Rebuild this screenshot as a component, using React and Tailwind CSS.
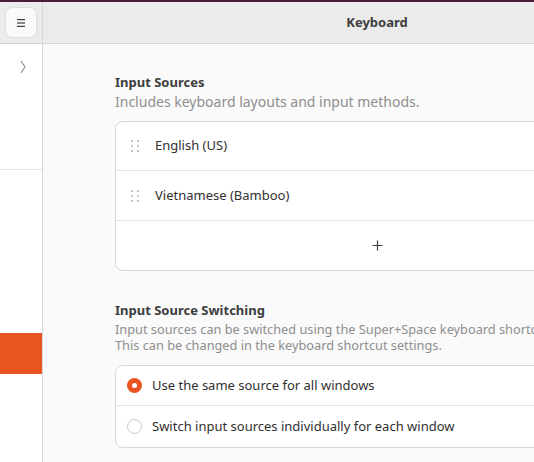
import React from 'react';

const font = { fontFamily: '"Noto Sans", "Open Sans", sans-serif' };

function DragHandle() {
  return (
    <div className="grid grid-cols-2 gap-x-[4px] gap-y-[3px] w-[8px]">
      {[0, 1, 2, 3, 4, 5].map((i) => (
        <span key={i} className="block w-[2px] h-[2px] rounded-full bg-[#b5b5b5]" />
      ))}
    </div>
  );
}

function Radio({ checked }) {
  if (checked) {
    return (
      <span className="flex items-center justify-center w-[15px] h-[15px] rounded-full bg-[#e95420]">
        <span className="block w-[5px] h-[5px] rounded-full bg-white" />
      </span>
    );
  }
  return <span className="block w-[15px] h-[15px] rounded-full border border-[#c9c9c9] bg-white" />;
}

export default function App() {
  return (
    <div className="w-[534px] h-[462px] overflow-hidden bg-[#fafafa] flex flex-col" style={font}>
      {/* window top edge */}
      <div className="h-[2px] shrink-0 bg-[#4a1d3b]" />

      <div className="flex flex-1 min-h-0">
        {/* Sidebar */}
        <div className="w-[43px] shrink-0 flex flex-col border-r border-[#d6d6d6] bg-white">
          <div className="h-[42px] shrink-0 bg-[#ebebeb] border-b border-[#d6d6d6] flex items-start pl-[6px] pt-[6px]">
            <button className="w-[30px] h-[29px] rounded-[6px] bg-[#fafafa] shadow-[0_0_0_1px_rgba(0,0,0,0.05)] flex items-center justify-center">
              <svg width="12" height="10" viewBox="0 0 12 10">
                <rect x="2" y="1" width="8" height="1.2" fill="#3d3d3d" />
                <rect x="2" y="4.4" width="8" height="1.2" fill="#3d3d3d" />
                <rect x="2" y="7.8" width="8" height="1.2" fill="#3d3d3d" />
              </svg>
            </button>
          </div>
          <div className="h-[126px] shrink-0 border-b border-[#e3e3e3] flex items-start justify-end pr-[16px] pt-[16px]">
            <svg width="6" height="14" viewBox="0 0 6 14">
              <path d="M1 1 L5 7 L1 13" fill="none" stroke="#8a8a8a" strokeWidth="1.1" />
            </svg>
          </div>
          <div className="h-[163px] shrink-0" />
          <div className="h-[41px] shrink-0 bg-[#e95420]" />
        </div>

        {/* Main pane */}
        <div className="w-[668px] shrink-0 flex flex-col">
          <div className="h-[42px] shrink-0 bg-[#ebebeb] border-b border-[#d6d6d6] flex items-center justify-center">
            <span className="text-[13px] font-bold text-[#3d3d3d]">Keyboard</span>
          </div>

          <div className="px-[72px] pt-[28px] flex flex-col">
            <h2 className="text-[13px] leading-[20px] font-bold text-[#3d3d3d]">Input Sources</h2>
            <p className="text-[14px] leading-[20px] text-[#8e8e8e]">Includes keyboard layouts and input methods.</p>

            <div className="mt-[9px] rounded-[8px] border border-[#dadada] bg-white flex flex-col">
              <div className="h-[49px] flex items-center gap-[16px] pl-[15px] border-b border-[#e3e3e3]">
                <DragHandle />
                <span className="text-[13px] text-[#303030]">English (US)</span>
              </div>
              <div className="h-[50px] flex items-center gap-[16px] pl-[15px] border-b border-[#e3e3e3]">
                <DragHandle />
                <span className="text-[13px] text-[#303030]">Vietnamese (Bamboo)</span>
              </div>
              <div className="h-[49px] flex items-center justify-center">
                <svg width="11" height="11" viewBox="0 0 11 11">
                  <path d="M5.5 0.5 V10.5 M0.5 5.5 H10.5" stroke="#3d3d3d" strokeWidth="1.2" />
                </svg>
              </div>
            </div>

            <h2 className="mt-[29px] text-[13px] leading-[20px] font-bold text-[#3d3d3d]">Input Source Switching</h2>
            <p className="text-[12.75px] leading-[16px] text-[#8e8e8e] mt-[1px] whitespace-nowrap">
              Input sources can be switched using the Super+Space keyboard shortcut.
              <br />
              This can be changed in the keyboard shortcut settings.
            </p>

            <div className="mt-[12px] rounded-[8px] border border-[#dadada] bg-white flex flex-col">
              <div className="h-[40px] flex items-center gap-[10px] pl-[11px] border-b border-[#e3e3e3]">
                <Radio checked />
                <span className="text-[13px] text-[#303030]">Use the same source for all windows</span>
              </div>
              <div className="h-[41px] flex items-center gap-[10px] pl-[11px]">
                <Radio />
                <span className="text-[13px] text-[#303030]">Switch input sources individually for each window</span>
              </div>
            </div>
          </div>
        </div>
      </div>
    </div>
  );
}
